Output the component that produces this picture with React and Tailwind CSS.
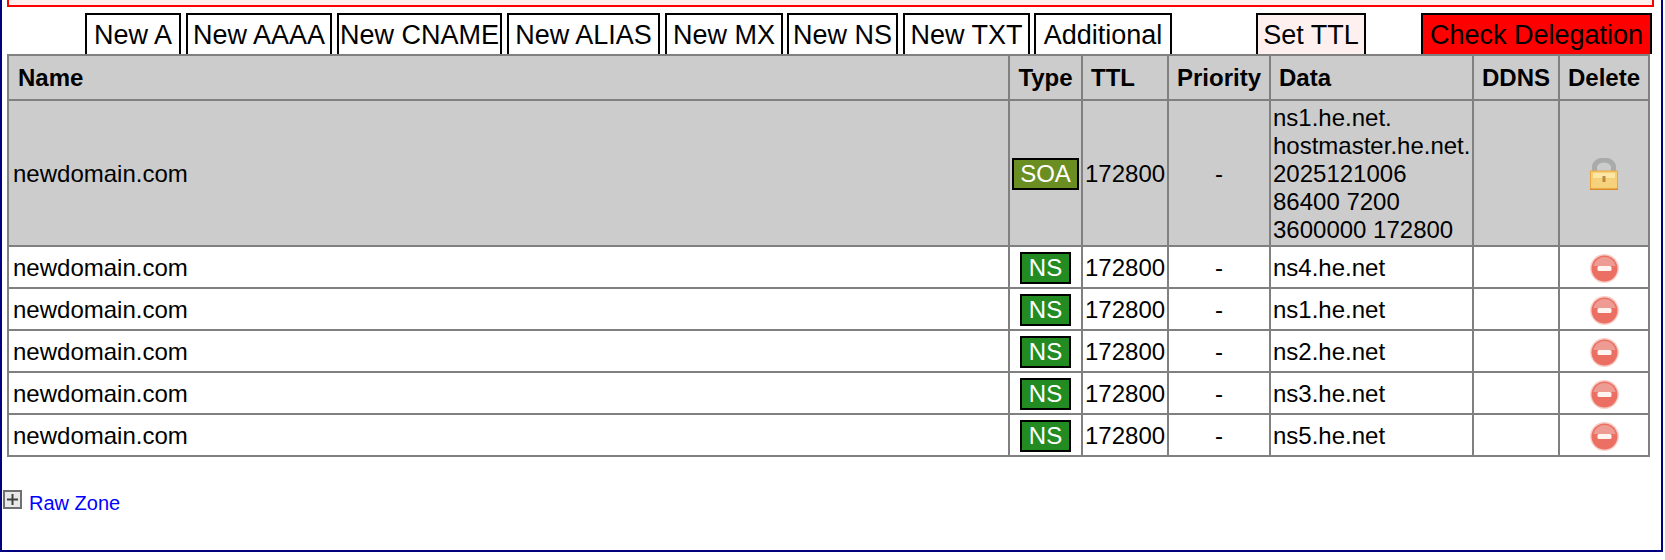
// DNS zone record table
const tabs = [
    { label: "New A", width: "w-[96px]", margin: "ml-[83px]" },
    { label: "New AAAA", width: "w-[146px]", margin: "ml-[5px]" },
    { label: "New CNAME", width: "w-[165px]", margin: "ml-[5px]" },
    { label: "New ALIAS", width: "w-[153px]", margin: "ml-[5px]" },
    { label: "New MX", width: "w-[118px]", margin: "ml-[5px]" },
    { label: "New NS", width: "w-[111px]", margin: "ml-[4px]" },
    { label: "New TXT", width: "w-[127px]", margin: "ml-[5px]" },
    { label: "Additional", width: "w-[138px]", margin: "ml-[4px]" },
    { label: "Set TTL", width: "w-[110px]", margin: "ml-[84px]", tone: "bg-[#fff0f0]" },
    { label: "Check Delegation", width: "w-[231px]", margin: "ml-[55px]", tone: "bg-[#ff0000]" },
];

const nsRecords = ["ns4.he.net", "ns1.he.net", "ns2.he.net", "ns3.he.net", "ns5.he.net"];

const cell = "border-2 border-[#808080] px-[3px] pt-[2px] pb-0 align-middle";
const head = "border-2 border-[#808080] px-2 py-0 align-middle font-bold text-center";

const TypeBadge = ({ children, tone }) => (
    <span className={`inline-block h-[32px] border-2 border-black px-[6.5px] text-white leading-[28px] ${tone}`}>
        {children}
    </span>
);

const DeleteIcon = () => (
    <svg width="29" height="29" viewBox="0 0 29 29" className="mx-auto block">
        <circle cx="14.5" cy="14.5" r="14.4" fill="#f6cfc9" />
        <circle cx="14.5" cy="14.5" r="13" fill="#ec6f63" />
        <path d="M3.3 12a11.5 11.5 0 0 1 22.4 0z" fill="#ee9c93" />
        <rect x="7.5" y="12" width="14" height="5" rx="1.5" fill="#fff4f0" />
    </svg>
);

const LockIcon = () => (
    <svg width="28" height="32" viewBox="0 0 28 32" className="mx-auto block">
        <path d="M4.5 15V9a9.5 7 0 0 1 19 0v6" fill="none" stroke="#a9abab" strokeWidth="5" />
        <rect x="0.5" y="13" width="27" height="18.5" fill="#f6cf73" stroke="#e8a63f" />
        <rect x="3" y="15" width="22" height="5" fill="#fde7a6" />
        <rect x="3" y="21" width="22" height="8" fill="#f7d27e" />
        <rect x="12.5" y="18" width="3" height="6" fill="#b98a3c" />
        <rect x="0" y="30.5" width="28" height="1.5" fill="#d98a2b" />
    </svg>
);

const PlusBox = () => (
    <svg width="19" height="19" viewBox="0 0 19 19" className="block shrink-0">
        <rect x="1" y="1" width="17" height="17" fill="#e8e8e8" stroke="#707070" strokeWidth="2" />
        <path d="M4 9.5h11M9.5 4v11" stroke="#404040" strokeWidth="2" />
    </svg>
);

export default function App() {
    return (
        <div className="w-[1663px] h-[552px] border-x-2 border-b-2 border-[#000080] bg-white text-black text-[24px] font-['Liberation_Sans',Arial,sans-serif]">
            {/* Message box, cut off by the top edge */}
            <div className="ml-[5px] w-[1647px] h-[7px] border-x-2 border-b-2 border-[#ff0000] bg-[#fff0f0]" />

            {/* Action tabs */}
            <div className="flex h-[41px] mt-[6px]">
                {tabs.map((t) => (
                    <div
                        key={t.label}
                        className={`h-[41px] border-x-2 border-t-2 border-black text-[27px] leading-[40px] text-center whitespace-nowrap ${t.width} ${t.margin} ${t.tone || "bg-white"}`}
                    >
                        {t.label}
                    </div>
                ))}
            </div>

            {/* Records */}
            <table className="ml-[5px] w-[1643px] table-fixed border-collapse">
                <colgroup>
                    <col className="w-[1001px]" />
                    <col className="w-[73px]" />
                    <col className="w-[86px]" />
                    <col className="w-[102px]" />
                    <col className="w-[203px]" />
                    <col className="w-[86px]" />
                    <col className="w-[90px]" />
                </colgroup>
                <thead>
                    <tr className="h-[45px] bg-[#cccccc]">
                        <th className={`${head} !px-[9px] text-left`}>Name</th>
                        <th className={head}>Type</th>
                        <th className={`${head} !px-[8px] text-left`}>TTL</th>
                        <th className={`${head} !px-0`}>Priority</th>
                        <th className={`${head} !px-[8px] text-left`}>Data</th>
                        <th className={`${head} !px-0`}>DDNS</th>
                        <th className={`${head} !px-0`}>Delete</th>
                    </tr>
                </thead>
                <tbody>
                    <tr className="h-[146px] bg-[#cccccc]">
                        <td className={`${cell} !pl-[4px]`}>newdomain.com</td>
                        <td className={`${cell} !px-0 text-center`}><TypeBadge tone="bg-[#6b8e23]">SOA</TypeBadge></td>
                        <td className={`${cell} !pl-[2px]`}>172800</td>
                        <td className={`${cell} text-center`}>-</td>
                        <td className={`${cell} !pl-[2px] whitespace-nowrap leading-[28px]`}>
                            ns1.he.net.<br />
                            hostmaster.he.net.<br />
                            2025121006<br />
                            86400 7200<br />
                            3600000 172800
                        </td>
                        <td className={cell}></td>
                        <td className={cell}><LockIcon /></td>
                    </tr>
                    {nsRecords.map((ns) => (
                        <tr key={ns} className="h-[42px]">
                            <td className={`${cell} !pl-[4px]`}>newdomain.com</td>
                            <td className={`${cell} !px-0 text-center`}><TypeBadge tone="bg-[#228b22]">NS</TypeBadge></td>
                            <td className={`${cell} !pl-[2px]`}>172800</td>
                            <td className={`${cell} text-center`}>-</td>
                            <td className={`${cell} !pl-[2px]`}>{ns}</td>
                            <td className={cell}></td>
                            <td className={cell}><DeleteIcon /></td>
                        </tr>
                    ))}
                </tbody>
            </table>

            {/* Raw zone toggle */}
            <div className="flex items-start mt-[33px] ml-[1px] gap-[7px]">
                <PlusBox />
                <a href="#raw" className="text-[20px] leading-[26px] text-[#0000ff]">Raw Zone</a>
            </div>
        </div>
    );
}
